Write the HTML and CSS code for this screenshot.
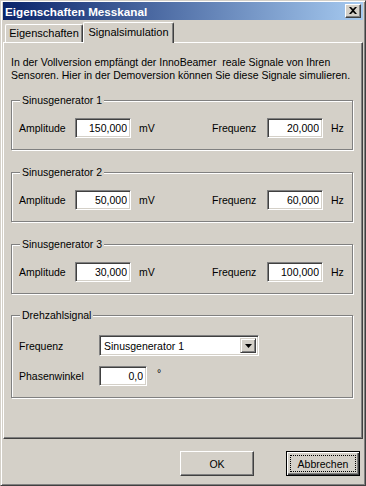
FILE: index.html
```
<!DOCTYPE html>
<html lang="de">
<head>
    <meta charset="UTF-8">
    <title>Eigenschaften Messkanal</title>
    <link rel="stylesheet" href="styles.css">
</head>
<body>
<div class="window">
    <div class="titlebar">
        <span class="title">Eigenschaften Messkanal</span>
        <span class="close">
            <svg width="8" height="7" viewBox="0 0 8 7"><path d="M0 0h2l2 2 2-2h2L5 3.5 8 7H6L4 5 2 7H0l3-3.5z" fill="#000"/></svg>
        </span>
    </div>

    <div class="tabs">
        <div class="tab">Eigenschaften</div>
        <div class="tab active">Signalsimulation</div>
    </div>

    <div class="panel">
        <p class="intro">In der Vollversion empfängt der InnoBeamer&nbsp; reale Signale von Ihren<br>Sensoren. Hier in der Demoversion können Sie diese Signale simulieren.</p>

        <fieldset class="group">
            <legend>Sinusgenerator 1</legend>
            <div class="row">
                <span class="label">Amplitude</span>
                <input class="field" value="150,000">
                <span class="unit amp">mV</span>
                <span class="label freq">Frequenz</span>
                <input class="field" value="20,000">
                <span class="unit">Hz</span>
            </div>
        </fieldset>

        <fieldset class="group">
            <legend>Sinusgenerator 2</legend>
            <div class="row">
                <span class="label">Amplitude</span>
                <input class="field" value="50,000">
                <span class="unit amp">mV</span>
                <span class="label freq">Frequenz</span>
                <input class="field" value="60,000">
                <span class="unit">Hz</span>
            </div>
        </fieldset>

        <fieldset class="group">
            <legend>Sinusgenerator 3</legend>
            <div class="row">
                <span class="label">Amplitude</span>
                <input class="field" value="30,000">
                <span class="unit amp">mV</span>
                <span class="label freq">Frequenz</span>
                <input class="field" value="100,000">
                <span class="unit">Hz</span>
            </div>
        </fieldset>

        <fieldset class="group speed">
            <legend>Drehzahlsignal</legend>
            <div class="row combo-row">
                <span class="label wide">Frequenz</span>
                <div class="combo">
                    <span class="combo-text">Sinusgenerator 1</span>
                    <span class="combo-btn">
                        <svg width="7" height="4" viewBox="0 0 7 4"><path d="M0 0h7L3.5 4z" fill="#000"/></svg>
                    </span>
                </div>
            </div>
            <div class="row">
                <span class="label wide">Phasenwinkel</span>
                <input class="field small" value="0,0">
                <span class="unit deg">°</span>
            </div>
        </fieldset>
    </div>

    <div class="buttons">
        <button class="btn">OK</button>
        <button class="btn default"><span class="focus">Abbrechen</span></button>
    </div>
</div>
</body>
</html>
```

FILE: styles.css
```
body {
    margin: 0;
    font-family: "Liberation Sans", Arial, sans-serif;
    font-size: 10.5px;
    color: #000;
    background-color: #d4d0c8;
}
.window {
    width: 366px;
    height: 486px;
    box-sizing: border-box;
    background-color: #d4d0c8;
    border: 1px solid;
    border-color: #d4d0c8 #404040 #404040 #d4d0c8;
    box-shadow: inset 1px 1px #fff, inset -1px -1px #808080;
    padding: 1px 2px 2px 2px;
    display: flex;
    flex-direction: column;
}
.titlebar {
    height: 18px;
    flex: none;
    display: flex;
    align-items: center;
    background: linear-gradient(to right, #0a246a, #a6caf0);
    padding-left: 2px;
}
.title {
    color: #fff;
    font-weight: bold;
    font-size: 11.7px;
}
.close {
    margin-left: auto;
    margin-right: 2px;
    width: 16px;
    height: 14px;
    box-sizing: border-box;
    background-color: #d4d0c8;
    border: 1px solid;
    border-color: #fff #404040 #404040 #fff;
    box-shadow: inset -1px -1px #808080;
    display: flex;
    align-items: center;
    justify-content: center;
    padding: 0 1px 1px 0;
}
.close svg {
    display: block;
}

/* tabs */
.tabs {
    flex: none;
    height: 20px;
    margin-top: 2px;
    padding-left: 2px;
    display: flex;
    align-items: flex-end;
    position: relative;
    z-index: 1;
}
.tab {
    width: 78px;
    height: 18px;
    box-sizing: border-box;
    border: 1px solid;
    border-color: #fff #404040 transparent #fff;
    border-bottom: none;
    border-radius: 2px 2px 0 0;
    box-shadow: inset -1px 0 #808080;
    text-align: center;
    line-height: 17px;
    font-size: 11px;
}
.tab.active {
    width: 91px;
    height: 21px;
    margin-bottom: -1px;
    background-color: #d4d0c8;
    line-height: 19px;
}

.panel {
    flex: none;
    height: 397px;
    box-sizing: border-box;
    border: 1px solid;
    border-color: #fff #404040 #404040 #fff;
    box-shadow: inset -1px -1px #808080;
    padding: 13px 9px 0 7px;
}
.intro {
    margin: 0;
    line-height: 13px;
    white-space: nowrap;
}

/* group boxes */
.group {
    margin: 16px 0 0;
    padding: 11px 7px 11px;
    min-width: 0;
    border: 1px solid #808080;
    box-shadow: inset 1px 1px #fff, 1px 1px #fff;
}
.intro + .group {
    margin-top: 12px;
}
.group legend {
    margin-left: 1px;
    padding: 0 2px;
    line-height: 13px;
    background-color: #d4d0c8;
}
.speed {
    margin-top: 15px;
    padding-top: 13px;
}
.row {
    display: flex;
    align-items: center;
    height: 20px;
}
.combo-row {
    height: 21px;
    margin-bottom: 10px;
}
.label {
    width: 56px;
    flex: none;
}
.label.freq {
    width: 55px;
}
.label.wide {
    width: 80px;
}
.unit {
    margin-left: 8px;
}
.unit.amp {
    width: 73px;
    flex: none;
}
.unit.deg {
    margin-left: 10px;
    margin-top: -6px;
}
.field {
    width: 56px;
    height: 20px;
    box-sizing: border-box;
    margin: 0;
    font: inherit;
    color: #000;
    text-align: right;
    padding: 0 3px 0 2px;
    background-color: #fff;
    border: 1px solid;
    border-color: #808080 #fff #fff #808080;
    box-shadow: inset 1px 1px #404040, inset -1px -1px #d4d0c8;
    outline: none;
}
.field.small {
    width: 48px;
}

.combo {
    width: 160px;
    height: 21px;
    box-sizing: border-box;
    background-color: #fff;
    border: 1px solid;
    border-color: #808080 #fff #fff #808080;
    box-shadow: inset 1px 1px #404040, inset -1px -1px #d4d0c8;
    display: flex;
    align-items: center;
    padding: 2px;
}
.combo-text {
    flex: 1;
    padding-left: 2px;
}
.combo-btn {
    width: 16px;
    height: 15px;
    box-sizing: border-box;
    background-color: #d4d0c8;
    border: 1px solid;
    border-color: #d4d0c8 #404040 #404040 #d4d0c8;
    box-shadow: inset 1px 1px #fff, inset -1px -1px #808080;
    display: flex;
    align-items: center;
    justify-content: center;
}
.combo-btn svg {
    display: block;
}

/* dialog buttons */
.buttons {
    flex: none;
    display: flex;
    justify-content: flex-end;
    gap: 32px;
    padding: 12px 3px 0 0;
}
.btn {
    width: 74px;
    height: 25px;
    box-sizing: border-box;
    margin: 0;
    font: inherit;
    color: #000;
    background-color: #d4d0c8;
    border: 1px solid;
    border-color: #fff #404040 #404040 #fff;
    box-shadow: inset -1px -1px #808080;
    padding: 0;
}
.btn.default {
    border-color: #000;
    box-shadow: inset 1px 1px #fff, inset -1px -1px #404040, inset -2px -2px #808080;
    padding: 3px;
}
.focus {
    display: flex;
    height: 100%;
    box-sizing: border-box;
    align-items: center;
    justify-content: center;
    border: 1px dotted #000;
}
```
